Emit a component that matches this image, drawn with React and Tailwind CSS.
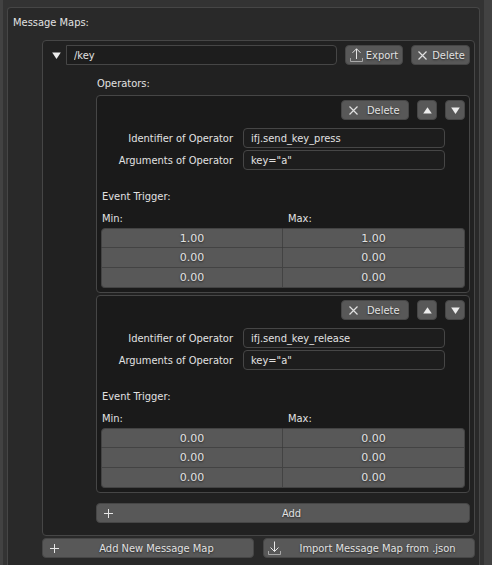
import React from "react";

const operators = [
  { id: "press", operator: "ifj.send_key_press", args: 'key="a"', rows: [["1.00", "1.00"], ["0.00", "0.00"], ["0.00", "0.00"]] },
  { id: "release", operator: "ifj.send_key_release", args: 'key="a"', rows: [["0.00", "0.00"], ["0.00", "0.00"], ["0.00", "0.00"]] },
];

const button =
  "flex h-5 shrink-0 items-center rounded-[4px] border border-[#464646] bg-[#585858] [text-shadow:0_1px_2px_rgba(0,0,0,0.6)]";
const field = "h-5 min-w-0 border border-[#464646] bg-[#1d1d1d] px-[7px] outline-none";
const heading = "h-5 leading-[22px]";

function Cross() {
  return (
    <svg className="size-[9px] shrink-0" viewBox="0 0 9 9" fill="none" stroke="#e0e0e0" strokeWidth="1.2" aria-hidden="true">
      <path d="M0.5 0.5 8.5 8.5M8.5 0.5 0.5 8.5" />
    </svg>
  );
}

function Plus() {
  return (
    <svg className="size-[9px] shrink-0" viewBox="0 0 9 9" fill="none" stroke="#e6e6e6" strokeWidth="1" aria-hidden="true">
      <path d="M4.5 0V9M0 4.5H9" />
    </svg>
  );
}

function ExportIcon() {
  return (
    <svg className="h-[14px] w-[13px] shrink-0" viewBox="0 0 13 14" fill="none" aria-hidden="true">
      <path d="M6.5 11V0.8M2.5 4.8 6.5 0.8 10.5 4.8" stroke="#e6e6e6" />
      <path d="M0.5 10V13.5H12.5V10" stroke="#a8a8a8" />
    </svg>
  );
}

function ImportIcon() {
  return (
    <svg className="h-[14px] w-[13px] shrink-0" viewBox="0 0 13 14" fill="none" aria-hidden="true">
      <path d="M6.5 0.5V10.5M2.5 6.5 6.5 10.5 10.5 6.5" stroke="#e6e6e6" />
      <path d="M0.5 10V13.5H12.5V10" stroke="#a8a8a8" />
    </svg>
  );
}

function Triangle({ up }) {
  return (
    <svg className="h-[7px] w-[9px] shrink-0" viewBox="0 0 9 7" fill="#ececec" aria-hidden="true">
      <path d={up ? "M4.5 0.3 8.8 6.5H0.2Z" : "M0.2 0.5H8.8L4.5 6.9Z"} />
    </svg>
  );
}

function Operator({ item }) {
  return (
    <section className="rounded-[4px] border border-[#464646] bg-[#1a1a1a] p-1">
      <div className="flex justify-end gap-2">
        <button type="button" className={`${button} w-[68px] gap-[9px] px-[7px]`}>
          <Cross />
          Delete
        </button>
        <button type="button" aria-label="Move up" className={`${button} w-5 justify-center`}>
          <Triangle up />
        </button>
        <button type="button" aria-label="Move down" className={`${button} w-5 justify-center`}>
          <Triangle />
        </button>
      </div>

      <div className="mt-2 mr-5 grid grid-cols-[132fr_202fr] items-center gap-x-[10px] gap-y-[2px]">
        <label htmlFor={`${item.id}-id`} className={`${heading} text-right whitespace-nowrap`}>Identifier of Operator</label>
        <input id={`${item.id}-id`} defaultValue={item.operator} className={`${field} rounded-[4px]`} />
        <label htmlFor={`${item.id}-args`} className={`${heading} text-right whitespace-nowrap`}>Arguments of Operator</label>
        <input id={`${item.id}-args`} defaultValue={item.args} className={`${field} rounded-[4px]`} />
      </div>

      <div className={`${heading} mt-4 px-px`}>Event Trigger:</div>
      <table className="mt-[2px] w-full table-fixed border-separate border-spacing-0">
        <thead>
          <tr className="text-left">
            <th className="p-0 pl-px font-normal"><div className={heading}>Min:</div></th>
            <th className="p-0 pl-[5px] font-normal"><div className={heading}>Max:</div></th>
          </tr>
        </thead>
        <tbody className="[&_tr:first-child_td:first-child]:rounded-tl-[4px] [&_tr:first-child_td:last-child]:rounded-tr-[4px] [&_tr:last-child_td:first-child]:rounded-bl-[4px] [&_tr:last-child_td:last-child]:rounded-br-[4px]">
          {item.rows.map((row, r) => (
            <tr key={r} className="h-5">
              {row.map((value, c) => (
                <td key={c} className="border-r border-b border-[#434343] bg-[#585858] p-0 first:border-l [tr:first-child>&]:border-t">
                  <input
                    defaultValue={value}
                    aria-label={`${c ? "Max" : "Min"} ${r + 1}`}
                    className="block h-[18px] w-full bg-transparent text-center font-['DejaVu_Sans',sans-serif] outline-none [text-shadow:0_1px_2px_rgba(0,0,0,0.6)]"
                  />
                </td>
              ))}
            </tr>
          ))}
        </tbody>
      </table>
    </section>
  );
}

export default function App() {
  return (
    <main className="min-h-screen border-r-8 border-l-3 border-[#424242] bg-[#333333] pt-[7px] pr-1 pl-1 font-['DejaVu_Sans_Condensed','DejaVu_Sans',sans-serif] text-[11px] leading-[15px] text-[#e2e2e2]">
      <div className="min-h-[calc(100vh-7px)] rounded-t-[4px] border border-b-0 border-[#464646] bg-[#292929] pt-1 pr-1 pb-[7px] pl-[5px]">
        <h1 className={heading}>Message Maps:</h1>

        <section className="mt-2 ml-[29px] rounded-[4px] border border-[#464646] bg-[#212121] pt-1 pr-1 pb-3">
          <div className="flex pl-[9px]">
            <button type="button" aria-label="Collapse message map" className="flex h-5 w-[14px] shrink-0 items-center">
              <Triangle />
            </button>
            <input aria-label="Message address" defaultValue="/key" className={`${field} flex-1 rounded-r-[4px]`} />
            <button type="button" className={`${button} ml-2 w-[58px] justify-center gap-[3px]`}>
              <ExportIcon />
              Export
            </button>
            <button type="button" className={`${button} ml-2 w-[59px] justify-center gap-[5px] pl-[2px]`}>
              <Cross />
              Delete
            </button>
          </div>

          <div className="pl-[53px]">
            <h2 className={`${heading} mt-2 px-px`}>Operators:</h2>
            <div className="mt-[2px] flex flex-col gap-[2px]">
              {operators.map((item) => (
                <Operator key={item.id} item={item} />
              ))}
            </div>
            <button type="button" className={`${button} mt-[10px] w-full px-[7px]`}>
              <Plus />
              <span className="flex-1 pl-2 text-center">Add</span>
            </button>
          </div>
        </section>

        <div className="mt-[2px] ml-[29px] grid grid-cols-2 gap-[9px]">
          <button type="button" className={`${button} px-[7px]`}>
            <Plus />
            <span className="flex-1 pl-2 text-center whitespace-nowrap">Add New Message Map</span>
          </button>
          <button type="button" className={`${button} px-1`}>
            <ImportIcon />
            <span className="flex-1 pl-1 text-center whitespace-nowrap">Import Message Map from .json</span>
          </button>
        </div>
      </div>
    </main>
  );
}
